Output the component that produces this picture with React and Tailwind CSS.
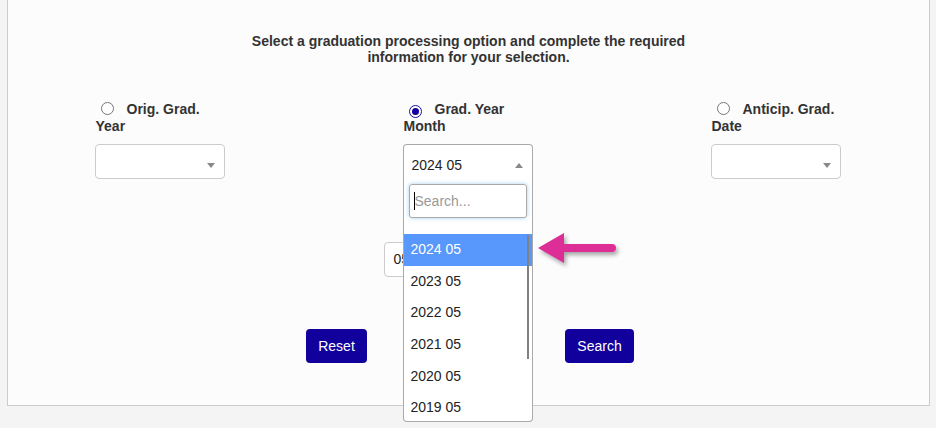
import React from "react";

const font = { fontFamily: '"Liberation Sans", Arial, sans-serif' };

const Radio = ({ checked }) => (
  <span
    className={`inline-flex w-[13px] h-[13px] rounded-full border items-center justify-center align-[-1px] ml-[5px] mr-[13px] bg-white ${
      checked ? "border-[#1a0f9e]" : "border-[#767676]"
    }`}
  >
    {checked && <span className="w-[7px] h-[7px] rounded-full bg-[#12009c]" />}
  </span>
);

const Caret = ({ up }) => (
  <svg width="8" height="5" viewBox="0 0 8 5" className="absolute right-[9px] top-[18px]">
    <path d={up ? "M0 5 L4 0 L8 5 Z" : "M0 0 L8 0 L4 5 Z"} fill="#888" />
  </svg>
);

const options = ["2024 05", "2023 05", "2022 05", "2021 05", "2020 05", "2019 05"];

const Column = ({ first, second, checked, open }) => (
  <div className="w-[130px] relative">
    <div className="text-[14px] leading-[17px] font-bold text-[#333] h-[34px] pl-px">
      <Radio checked={checked} />
      {first}
      <br />
      {second}
    </div>
    {open ? (
      <div className="mt-[9px] h-[35px] bg-white border-t border-x border-[#aaa] rounded-t-[4px] relative text-[14px] text-[#222] pl-[8px] leading-[40px]">
        2024 05
        <Caret up />
      </div>
    ) : (
      <div className="mt-[9px] h-[35px] bg-white border border-[#ccc] rounded-[4px] relative">
        <Caret />
      </div>
    )}
    {open && (
      <div className="absolute left-0 top-[78px] w-[130px] h-[243px] bg-white border-x border-b border-[#aaa] rounded-b-[4px] overflow-hidden z-10">
        <div className="px-[5px] pt-[5px]">
          <div className="h-[34px] border border-[#aaa] rounded-[3px] shadow-[0_0_4px_rgba(102,175,233,0.6)] flex items-center pl-[4px] text-[14px]">
            <span className="w-px h-[18px] bg-black" />
            <span className="text-[#999]">Search...</span>
          </div>
        </div>
        <div className="mt-[16px] relative">
          {options.map((o, i) => (
            <div
              key={o}
              className={`h-[31.7px] leading-[31.7px] pl-[7px] text-[14px] ${
                i === 0 ? "bg-[#5897fb] text-white" : "text-[#222]"
              }`}
            >
              {o}
            </div>
          ))}
          <div className="absolute right-[3px] top-[1px] w-[2px] h-[124px] bg-[#808080]" />
        </div>
      </div>
    )}
  </div>
);

export default function App() {
  return (
    <div className="w-[936px] h-[428px] bg-[#f4f4f4] pl-[7px]" style={font}>
      <div className="w-[923px] h-[406px] bg-[#fcfcfc] border-x border-b border-[#ccc] relative">
        <p className="pt-[33px] text-center text-[14px] leading-[16px] font-bold text-[#333]">
          Select a graduation processing option and complete the required
          <br />
          information for your selection.
        </p>

        <div className="mt-[36px] ml-[-2px] flex justify-center gap-[178px]">
          <Column first="Orig. Grad." second="Year" />
          <Column first="Grad. Year" second="Month" checked open />
          <Column first="Anticip. Grad." second="Date" />
        </div>

        <div className="mt-[63px] flex justify-center">
          <div className="w-[146px] mr-[24px] h-[35px] bg-white border border-[#ccc] rounded-[4px] pl-[9px] text-[14px] leading-[33px] text-[#222]">
            05
          </div>
        </div>

        <div className="mt-[52px] ml-[3px] flex justify-center gap-[198px]">
          <button className="w-[61px] h-[34px] bg-[#12009c] text-white text-[14px] rounded-[4px]">
            Reset
          </button>
          <button className="w-[69px] h-[34px] bg-[#12009c] text-white text-[14px] rounded-[4px]">
            Search
          </button>
        </div>

        <svg
          width="90"
          height="44"
          viewBox="0 0 90 44"
          className="absolute left-[528px] top-[226px] z-20"
        >
          <defs>
            <filter id="sh" x="-20%" y="-30%" width="140%" height="170%">
              <feDropShadow dx="2" dy="3" stdDeviation="2" floodColor="#000" floodOpacity="0.35" />
            </filter>
          </defs>
          <g filter="url(#sh)">
            <path d="M2 22 L28 7 L28 18 L76 18 Q80 18 80 22 Q80 26 76 26 L28 26 L28 37 Z" fill="#dc2d96" />
          </g>
        </svg>
      </div>
    </div>
  );
}
